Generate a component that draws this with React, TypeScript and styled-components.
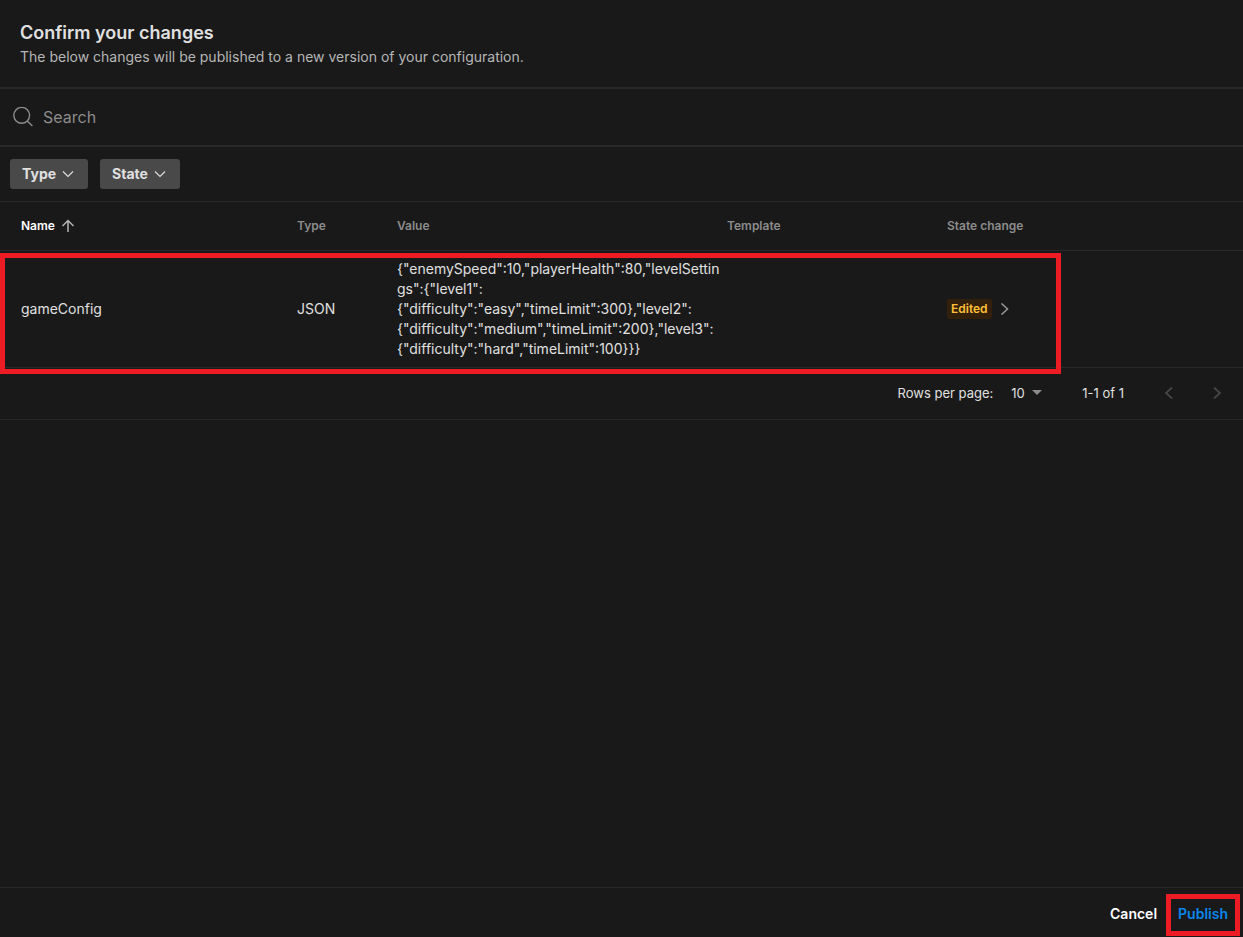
import React from "react";
import styled, { createGlobalStyle } from "styled-components";

const color = {
  bg: "#191919",
  line: "#292929",
  text: "#e0e0e0",
  muted: "#b6b6b6",
  faint: "#8c8c8c",
  chip: "#494949",
  mark: "#ed1c24",
  accent: "#0a86ee",
};

const GlobalStyle = createGlobalStyle`
  *, *::before, *::after { box-sizing: border-box; }
  body {
    margin: 0;
    background: ${color.bg};
    color: ${color.text};
    font-family: Inter, "Liberation Sans", sans-serif;
    font-size: 14px;
    line-height: 20px;
  }
  button, input, select {
    font: inherit;
    color: inherit;
    background: none;
    border: 0;
    padding: 0;
    margin: 0;
    outline: 0;
  }
  button, select { cursor: pointer; }
`;

const Page = styled.div`
  display: flex;
  flex-direction: column;
  min-height: 100vh;
`;

const Header = styled.header`
  padding: 22px 20px 20px;
  border-bottom: 2px solid ${color.line};
`;

const Title = styled.h1`
  margin: 0;
  font-size: 18px;
  line-height: 22px;
  font-weight: 600;
`;

const Subtitle = styled.p`
  margin: 3px 0 0;
  color: ${color.muted};
`;

const SearchBar = styled.label`
  display: flex;
  align-items: center;
  gap: 9px;
  height: 58px;
  padding: 0 12px;
  border-bottom: 2px solid ${color.line};
  color: ${color.faint};
`;

const SearchInput = styled.input`
  flex: 1;
  font-size: 16px;
  line-height: 24px;
  &::placeholder {
    color: ${color.faint};
    opacity: 1;
  }
`;

const Filters = styled.div`
  display: flex;
  gap: 12px;
  padding: 12px 10px;
  border-bottom: 1px solid ${color.line};
`;

const FilterButton = styled.button`
  display: flex;
  align-items: center;
  gap: 6px;
  height: 30px;
  padding: 0 14px 0 12px;
  border-radius: 3px;
  background: ${color.chip};
  font-weight: 700;
`;

const Table = styled.table`
  width: 100%;
  table-layout: fixed;
  border-collapse: separate;
  border-spacing: 0;
`;

const Column = styled.col<{ $width?: number }>`
  width: ${(p) => (p.$width ? `${p.$width}px` : "auto")};
`;

const HeadCell = styled.th<{ $active?: boolean }>`
  height: 49px;
  padding: 0 0 0 7px;
  border-bottom: 1px solid ${color.line};
  color: ${(p) => (p.$active ? "#ffffff" : color.faint)};
  font-size: 12px;
  font-weight: 600;
  text-align: left;
  &:first-child { padding-left: 21px; }
`;

const SortButton = styled.button`
  display: flex;
  align-items: center;
  gap: 6px;
  svg { color: #b4b4b4; }
`;

const Row = styled.tr`
  position: relative;
`;

const RowMark = styled.span`
  position: absolute;
  top: 2px;
  left: 0;
  width: 1061px;
  height: 121px;
  border: 5px solid ${color.mark};
  pointer-events: none;
`;

const Cell = styled.td`
  padding: 8px 0 8px 7px;
  border-bottom: 1px solid ${color.line};
  overflow-wrap: anywhere;
  &:first-child { padding-left: 21px; }
`;

const StateLink = styled.button`
  display: flex;
  align-items: center;
  gap: 7px;
  color: #999999;
`;

const Badge = styled.span`
  padding: 0 4px;
  border-radius: 2px;
  background: #32200c;
  color: #ffc038;
  font-size: 12px;
  font-weight: 600;
`;

const Pagination = styled.div`
  display: flex;
  align-items: center;
  justify-content: flex-end;
  height: 52px;
  padding: 0 2px 2px 0;
  border-bottom: 1px solid ${color.line};
  font-size: 13px;
`;

const PageSize = styled.label`
  display: flex;
  align-items: center;
  gap: 18px;
`;

const SelectBox = styled.span`
  display: flex;
  align-items: center;
  gap: 5px;
`;

const Select = styled.select`
  appearance: none;
  width: 16px;
`;

const Range = styled.span`
  margin: 0 21px 0 40px;
`;

const PageButton = styled.button`
  display: flex;
  align-items: center;
  justify-content: center;
  width: 48px;
  height: 48px;
  color: #484848;
`;

const Footer = styled.footer`
  display: flex;
  justify-content: flex-end;
  align-items: center;
  gap: 9px;
  margin-top: auto;
  padding: 6px 3px 1px;
  border-top: 1px solid ${color.line};
`;

const Action = styled.button<{ $primary?: boolean }>`
  height: 42px;
  padding: ${(p) => (p.$primary ? "0 7px 2px" : "0 0 2px")};
  border: ${(p) => (p.$primary ? `5px solid ${color.mark}` : "0")};
  color: ${(p) => (p.$primary ? color.accent : "#ffffff")};
  font-weight: 600;
`;

type StrokeProps = { size?: [number, number]; d: string; width?: number };

const Stroke = ({ size = [12, 12], d, width = 1.3 }: StrokeProps) => (
  <svg
    width={size[0]}
    height={size[1]}
    viewBox={`0 0 ${size[0]} ${size[1]}`}
    fill="none"
    stroke="currentColor"
    strokeWidth={width}
    aria-hidden="true"
  >
    <path d={d} />
  </svg>
);

const filters = ["Type", "State"];
const row = {
  name: "gameConfig",
  type: "JSON",
  value:
    '{"enemySpeed":10,"playerHealth":80,"levelSettings":{"level1":{"difficulty":"easy","timeLimit":300},"level2":{"difficulty":"medium","timeLimit":200},"level3":{"difficulty":"hard","timeLimit":100}}}',
  state: "Edited",
};

export default function App() {
  return (
    <>
      <GlobalStyle />
      <Page>
        <Header>
          <Title>Confirm your changes</Title>
          <Subtitle>
            The below changes will be published to a new version of your configuration.
          </Subtitle>
        </Header>

        <SearchBar>
          <svg width="22" height="22" viewBox="0 0 22 22" fill="none" stroke="currentColor" strokeWidth="1.4" aria-hidden="true">
            <circle cx="9.7" cy="9.3" r="7.9" />
            <path d="M15.2 14.9 20.4 20.1" />
          </svg>
          <SearchInput type="text" placeholder="Search" aria-label="Search" />
        </SearchBar>

        <Filters>
          {filters.map((label) => (
            <FilterButton key={label} type="button">
              {label}
              <Stroke d="M1 3.5 6 8.5 11 3.5" width={1.1} />
            </FilterButton>
          ))}
        </Filters>

        <Table>
          <colgroup>
            <Column $width={290} />
            <Column $width={100} />
            <Column $width={330} />
            <Column $width={220} />
            <Column />
          </colgroup>
          <thead>
            <tr>
              <HeadCell scope="col" $active>
                <SortButton type="button">
                  Name
                  <Stroke size={[14, 14]} d="M7 13V1.5M1.5 7 7 1.5 12.5 7" width={1.5} />
                </SortButton>
              </HeadCell>
              <HeadCell scope="col">Type</HeadCell>
              <HeadCell scope="col">Value</HeadCell>
              <HeadCell scope="col">Template</HeadCell>
              <HeadCell scope="col">State change</HeadCell>
            </tr>
          </thead>
          <tbody>
            <Row>
              <Cell>
                {row.name}
                <RowMark />
              </Cell>
              <Cell>{row.type}</Cell>
              <Cell>{row.value}</Cell>
              <Cell />
              <Cell>
                <StateLink type="button">
                  <Badge>{row.state}</Badge>
                  <Stroke d="M2.5 0.5 8.5 6 2.5 11.5" width={1.5} />
                </StateLink>
              </Cell>
            </Row>
          </tbody>
        </Table>

        <Pagination>
          <PageSize>
            Rows per page:
            <SelectBox>
              <Select defaultValue="10">
                <option>10</option>
                <option>25</option>
                <option>50</option>
              </Select>
              <svg width="10" height="5" viewBox="0 0 10 5" fill="#8c8c8c" aria-hidden="true">
                <path d="M0 0h10L5 5z" />
              </svg>
            </SelectBox>
          </PageSize>
          <Range>1-1 of 1</Range>
          <PageButton type="button" aria-label="Previous page">
            <Stroke d="M9 0.5 3 6 9 11.5" width={1.7} />
          </PageButton>
          <PageButton type="button" aria-label="Next page">
            <Stroke d="M3 0.5 9 6 3 11.5" width={1.7} />
          </PageButton>
        </Pagination>

        <Footer>
          <Action type="button">Cancel</Action>
          <Action type="button" $primary>
            Publish
          </Action>
        </Footer>
      </Page>
    </>
  );
}
